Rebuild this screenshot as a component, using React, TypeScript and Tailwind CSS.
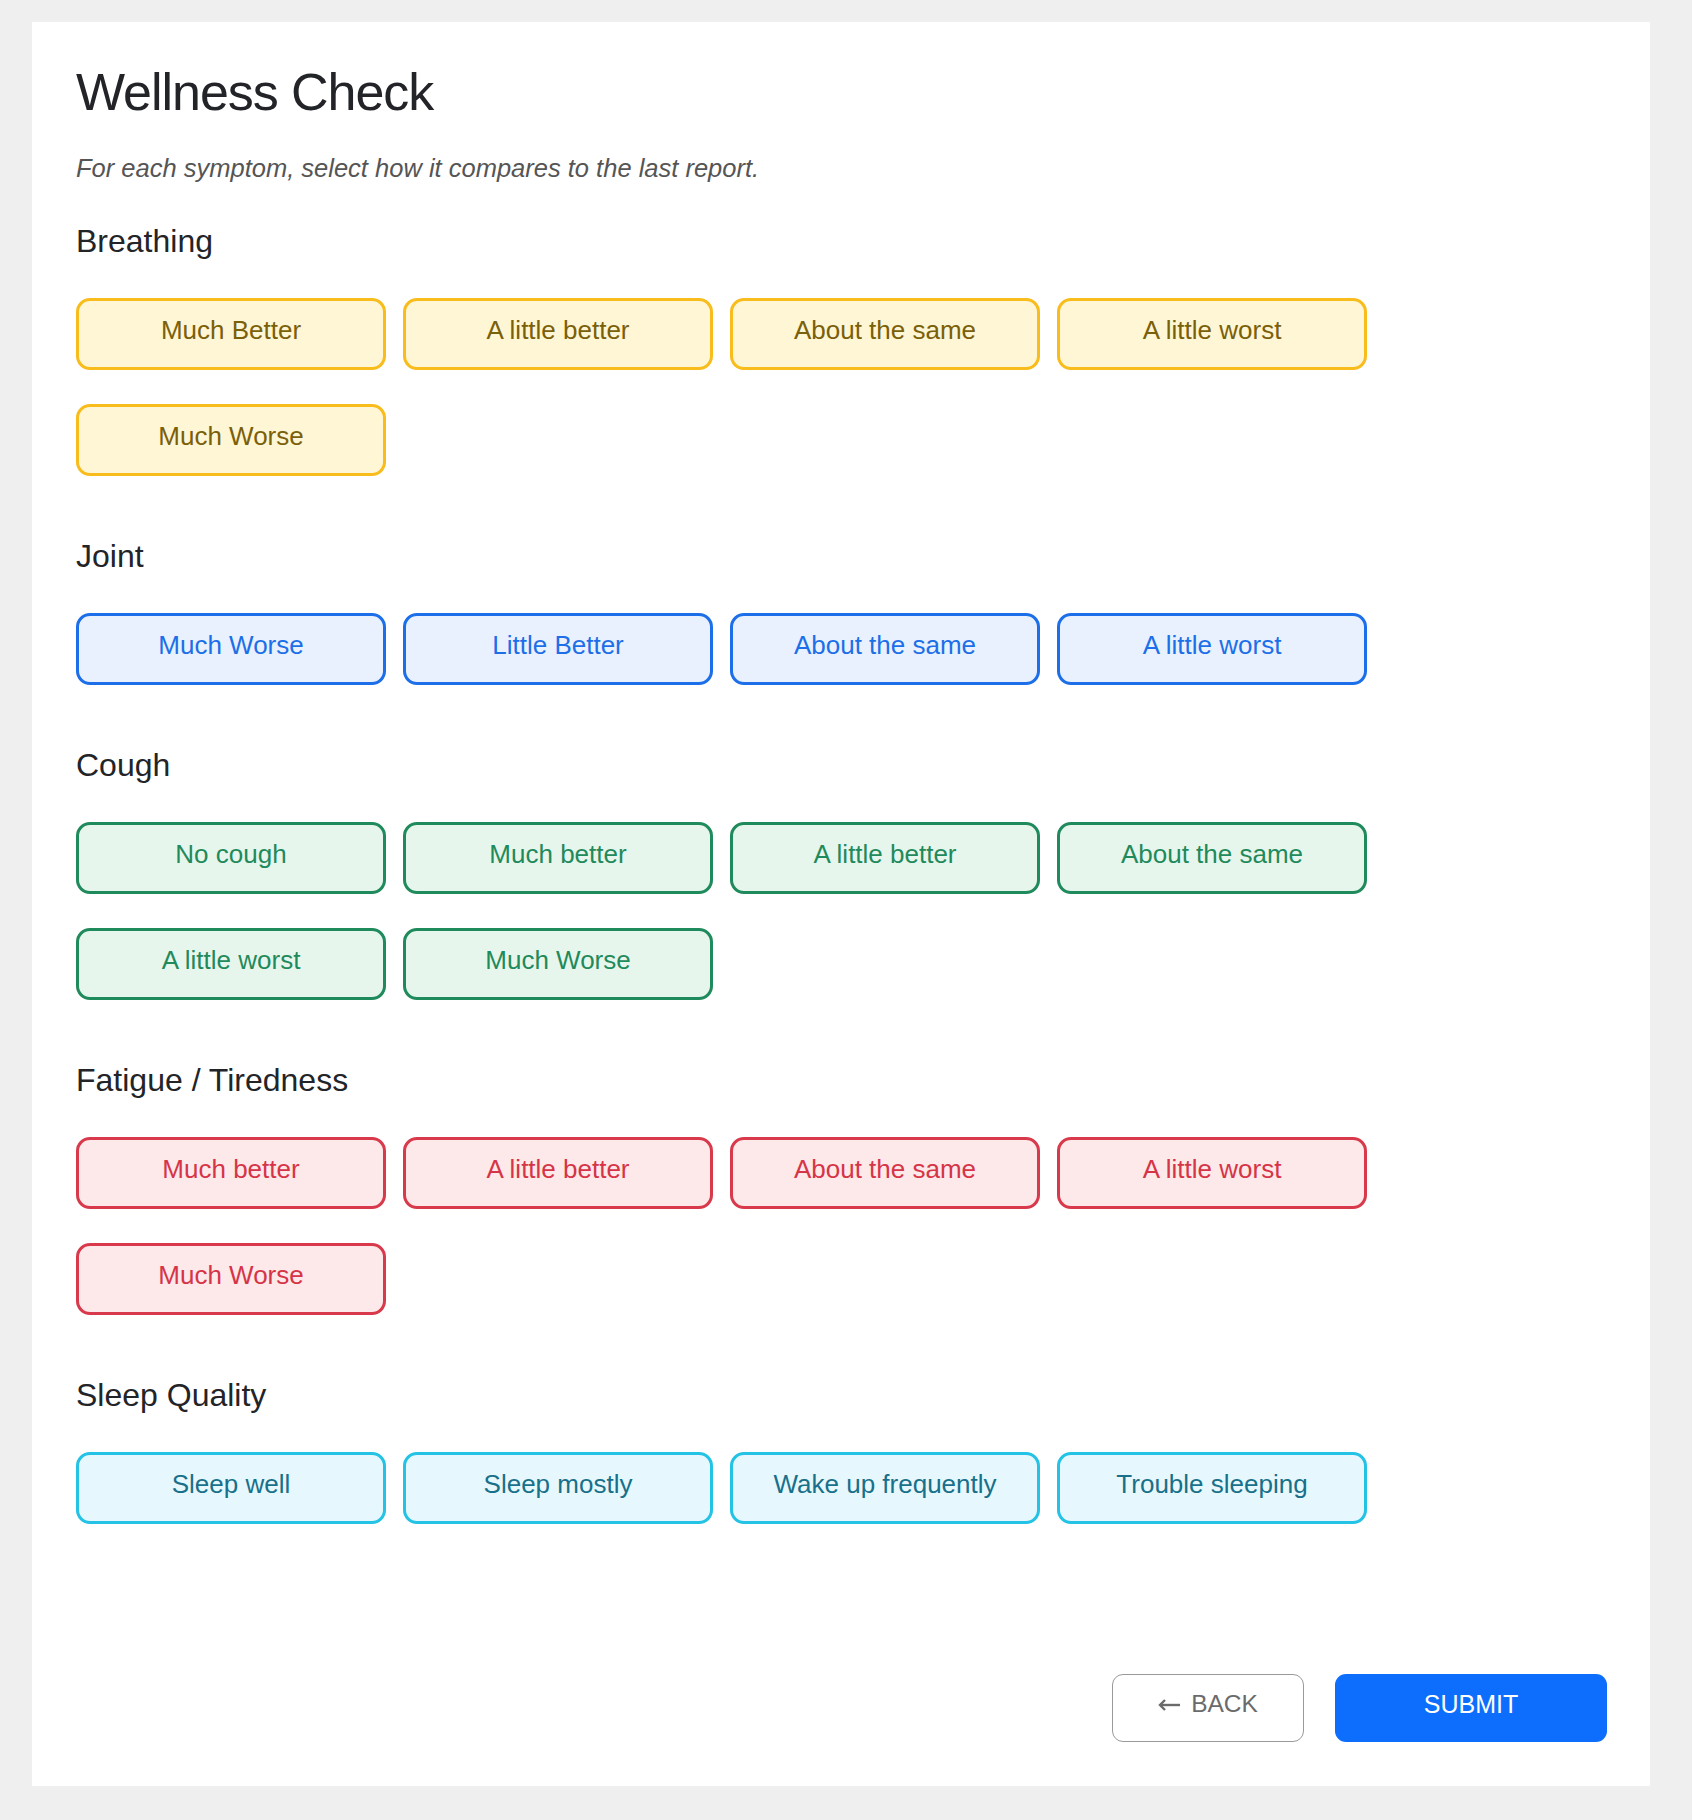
import { useState } from "react";

type Tone = "yellow" | "blue" | "green" | "red" | "cyan";

const toneClasses: Record<Tone, { idle: string; active: string }> = {
  yellow: {
    idle: "border-[#f8bc1c] bg-[#fff6d6] text-[#7a6008]",
    active: "border-[#f8bc1c] bg-[#f8bc1c] text-white",
  },
  blue: {
    idle: "border-[#1c6fe8] bg-[#e9f1fe] text-[#1c6fe8]",
    active: "border-[#1c6fe8] bg-[#1c6fe8] text-white",
  },
  green: {
    idle: "border-[#1f8a5b] bg-[#e7f6ed] text-[#1f8a5b]",
    active: "border-[#1f8a5b] bg-[#1f8a5b] text-white",
  },
  red: {
    idle: "border-[#d83a4b] bg-[#fde9e9] text-[#d63447]",
    active: "border-[#d83a4b] bg-[#d83a4b] text-white",
  },
  cyan: {
    idle: "border-[#24c2e4] bg-[#e6f8fd] text-[#18708a]",
    active: "border-[#24c2e4] bg-[#24c2e4] text-white",
  },
};

const sections: Array<{ title: string; tone: Tone; options: string[] }> = [
  { title: "Breathing", tone: "yellow", options: ["Much Better", "A little better", "About the same", "A little worst", "Much Worse"] },
  { title: "Joint", tone: "blue", options: ["Much Worse", "Little Better", "About the same", "A little worst"] },
  { title: "Cough", tone: "green", options: ["No cough", "Much better", "A little better", "About the same", "A little worst", "Much Worse"] },
  { title: "Fatigue / Tiredness", tone: "red", options: ["Much better", "A little better", "About the same", "A little worst", "Much Worse"] },
  { title: "Sleep Quality", tone: "cyan", options: ["Sleep well", "Sleep mostly", "Wake up frequently", "Trouble sleeping"] },
];

export default function App() {
  const [answers, setAnswers] = useState<Record<string, string>>({});

  return (
    <main className="min-h-[1820px] bg-[#efefef] pt-[22px] pl-[32px] font-['Liberation_Sans',Arial,sans-serif]">
      <section className="w-[1618px] bg-white pl-[44px] pr-[43px] pt-[44px] pb-[44px]">
        <h1 className="text-[52px] leading-none tracking-[-0.02em] text-[#222428]">Wellness Check</h1>
        <p className="mt-[38px] text-[25.5px] leading-none italic text-[#555]">
          For each symptom, select how it compares to the last report.
        </p>

        <div className="mt-[43px] flex flex-col gap-[64px]">
          {sections.map((section) => (
            <div key={section.title}>
              <h2 className="text-[32px] leading-none text-[#222428]">{section.title}</h2>
              <div className="mt-[41px] grid grid-cols-[repeat(4,310px)] gap-x-[17px] gap-y-[34px]">
                {section.options.map((option) => {
                  const selected = answers[section.title] === option;
                  const tone = toneClasses[section.tone];
                  return (
                    <button
                      key={option}
                      type="button"
                      onClick={() => setAnswers({ ...answers, [section.title]: option })}
                      className={`h-[72px] rounded-[14px] border-[3px] pb-[8px] text-[26px] leading-none ${selected ? tone.active : tone.idle}`}
                    >
                      {option}
                    </button>
                  );
                })}
              </div>
            </div>
          ))}
        </div>

        <div className="mt-[150px] flex justify-end gap-[31px]">
          <button type="button" className="flex h-[68px] w-[192px] items-center justify-center gap-[11px] rounded-[11px] border border-[#9a9a9a] bg-white pb-[6px] text-[24.5px] leading-none text-[#6b6b6b]">
            <svg width="22" height="14" viewBox="0 0 22 14" fill="none" stroke="#6b6b6b" strokeWidth="2.4">
              <path d="M22 7H2" />
              <path d="M7 2L2 7l5 5" />
            </svg>
            BACK
          </button>
          <button type="button" className="h-[68px] w-[272px] rounded-[11px] bg-[#0d6efd] pb-[6px] text-[25px] leading-none text-white">
            SUBMIT
          </button>
        </div>
      </section>
    </main>
  );
}
